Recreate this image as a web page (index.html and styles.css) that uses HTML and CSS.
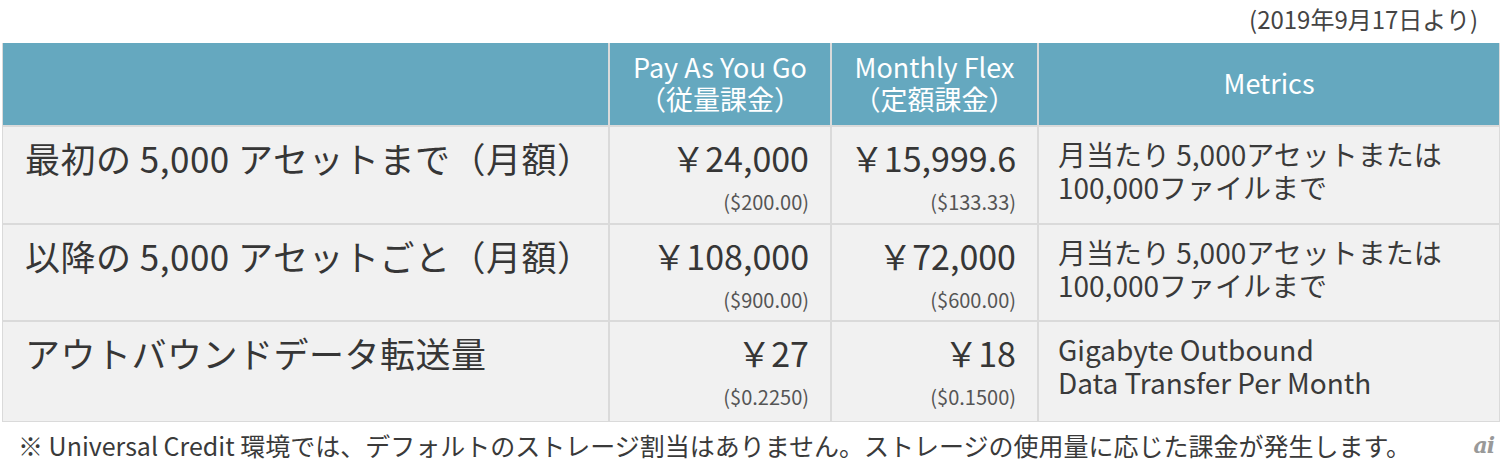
FILE: index.html
```html
<!DOCTYPE html>
<html lang="ja">
<head>
<meta charset="utf-8">
<title>Pricing</title>
<link rel="stylesheet" href="styles.css">
</head>
<body>
<div class="page">
  <div class="date">(2019年9月17日より)</div>
  <div class="table">
    <div class="hcell"></div>
    <div class="hcell center">Pay As You Go<br>（従量課金）</div>
    <div class="hcell center">Monthly Flex<br>（定額課金）</div>
    <div class="hcell center">Metrics</div>

    <div class="cell label">最初の 5,000 アセットまで（月額）</div>
    <div class="cell price"><span class="big">￥24,000</span><span class="usd">($200.00)</span></div>
    <div class="cell price"><span class="big">￥15,999.6</span><span class="usd">($133.33)</span></div>
    <div class="cell metric">月当たり 5,000アセットまたは<br>100,000ファイルまで</div>

    <div class="cell label">以降の 5,000 アセットごと（月額）</div>
    <div class="cell price"><span class="big">￥108,000</span><span class="usd">($900.00)</span></div>
    <div class="cell price"><span class="big">￥72,000</span><span class="usd">($600.00)</span></div>
    <div class="cell metric">月当たり 5,000アセットまたは<br>100,000ファイルまで</div>

    <div class="cell label">アウトバウンドデータ転送量</div>
    <div class="cell price"><span class="big">￥27</span><span class="usd">($0.2250)</span></div>
    <div class="cell price"><span class="big">￥18</span><span class="usd">($0.1500)</span></div>
    <div class="cell metric">Gigabyte Outbound<br>Data Transfer Per Month</div>
  </div>
  <div class="foot">
    <span class="note">※ Universal Credit 環境では、デフォルトのストレージ割当はありません。ストレージの使用量に応じた課金が発生します。</span>
    <span class="logo">ai</span>
  </div>
</div>
</body>
</html>
```
FILE: styles.css
```css
html, body {
  margin: 0;
  padding: 0;
  background: #ffffff;
}
body {
  font-family: "Noto Sans CJK JP", "Noto Sans", sans-serif;
  color: #3a3a3a;
  width: 1504px;
  height: 468px;
  overflow: hidden;
}
.page {
  display: flex;
  flex-direction: column;
  padding: 0 4px 0 2px;
}
.date {
  align-self: flex-end;
  font-size: 24px;
  line-height: 28px;
  height: 43px;
  box-sizing: border-box;
  padding: 5px 22px 0 0;
  color: #444;
}
.table {
  display: grid;
  grid-template-columns: 605px 220px 205px 460px;
  grid-template-rows: 82px 96px 95px 99px;
  background: #dadada;
  border: 1px solid #dadada;
  border-top: 0;
  gap: 2px;
  box-sizing: border-box;
  width: 1498px;
}
.hcell {
  background: #65a8bf;
  color: #ffffff;
  font-size: 27px;
  line-height: 32px;
  display: flex;
  align-items: center;
  justify-content: center;
  text-align: center;
  padding-bottom: 2px;
}
.cell {
  background: #f1f1f1;
}
.label {
  font-size: 35px;
  line-height: 42px;
  letter-spacing: 0.5px;
  padding: 10px 0 0 22px;
  color: #363636;
}
.price {
  display: flex;
  flex-direction: column;
  align-items: flex-end;
  padding: 10px 21px 0 0;
}
.big {
  font-size: 34px;
  line-height: 42px;
  color: #363636;
}
.usd {
  font-size: 20px;
  line-height: 24px;
  margin-top: 11px;
  color: #555;
}
.metric {
  font-size: 28px;
  line-height: 33px;
  padding: 11px 0 0 19px;
  color: #3a3a3a;
}
.foot {
  display: flex;
  align-items: center;
  justify-content: space-between;
  padding: 8px 6px 0 16px;
}
.note {
  font-size: 25px;
  line-height: 30px;
  color: #3a3a3a;
}
.logo {
  font-family: "DejaVu Serif", serif;
  font-style: italic;
  font-weight: bold;
  font-size: 22px;
  line-height: 28px;
  color: #999;
  letter-spacing: -1px;
}
```
